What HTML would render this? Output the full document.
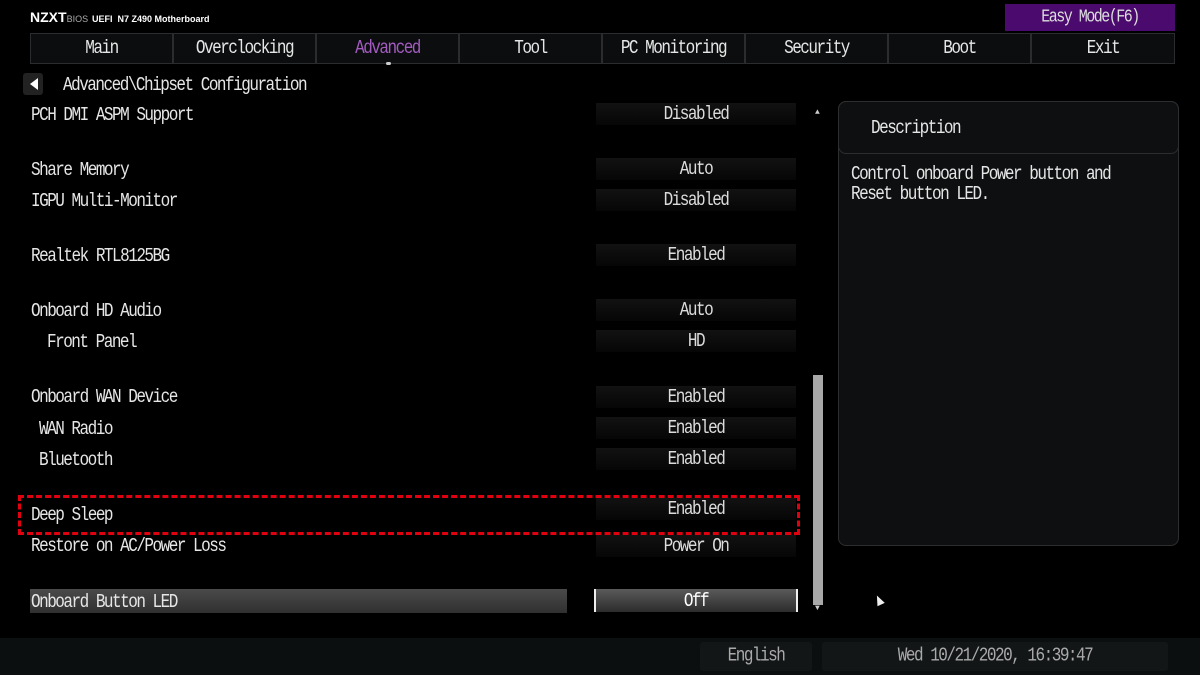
<!DOCTYPE html>
<html><head><meta charset="utf-8"><style>
*{margin:0;padding:0;box-sizing:border-box}
body{width:1200px;height:675px;background:#000;position:relative;overflow:hidden;font-family:"Liberation Mono",monospace;color:#e6e6e6}
.t{position:absolute;font-size:16px;letter-spacing:-1.5px;line-height:20px;white-space:nowrap;transform:scaleY(1.2);transform-origin:0 50%}
.lbl{left:31px}
.s{display:inline-block;transform:scaleY(1.2)}
.val{position:absolute;left:596px;width:200px;height:22px;background:linear-gradient(#121212,#060606);text-align:center;font-size:16px;letter-spacing:-1.5px;line-height:22px;color:#dcdcdc}
.tab{position:absolute;top:33px;height:31px;width:143px;background:#0b0d0e;border:1px solid #2a2d2f;text-align:center;font-size:16px;letter-spacing:-1.5px;line-height:28px;color:#e6e6e6}
</style></head><body>
<div style="position:absolute;left:30px;top:9px;font-family:'Liberation Sans',sans-serif;font-weight:bold;font-size:14px;color:#fff;letter-spacing:0">NZXT<span style="font-weight:normal;font-size:9px;color:#aaa">BIOS</span> <span style="font-size:9px">UEFI &nbsp;N7 Z490 Motherboard</span></div>
<div style="position:absolute;left:1005px;top:4px;width:170px;height:27px;background:#4a0a6e;text-align:center;font-size:15px;letter-spacing:-1.5px;line-height:27px;color:#ddd"><span class="s">Easy Mode(F6)</span></div>
<div class="tab" style="left:30px"><span class="s">Main</span></div>
<div class="tab" style="left:173px"><span class="s">Overclocking</span></div>
<div class="tab" style="left:316px;color:#a35bc0"><span class="s">Advanced</span></div>
<div class="tab" style="left:459px"><span class="s">Tool</span></div>
<div class="tab" style="left:602px"><span class="s">PC Monitoring</span></div>
<div class="tab" style="left:745px"><span class="s">Security</span></div>
<div class="tab" style="left:888px"><span class="s">Boot</span></div>
<div class="tab" style="left:1031px;width:144px"><span class="s">Exit</span></div>
<div style="position:absolute;left:386px;top:62px;width:5px;height:3px;background:#ccc;border-radius:2px"></div>
<div style="position:absolute;left:23px;top:73px;width:20px;height:22px;background:#222;border-radius:3px"></div>
<div style="position:absolute;left:30px;top:78px;width:0;height:0;border-top:6px solid transparent;border-bottom:6px solid transparent;border-right:8px solid #fff"></div>
<div class="t" style="left:63px;top:75px">Advanced\Chipset Configuration</div>

<div class="t lbl" style="top:105px">PCH DMI ASPM Support</div><div class="val" style="top:103px"><span class="s">Disabled</span></div>
<div class="t lbl" style="top:160px">Share Memory</div><div class="val" style="top:158px"><span class="s">Auto</span></div>
<div class="t lbl" style="top:191px">IGPU Multi-Monitor</div><div class="val" style="top:189px"><span class="s">Disabled</span></div>
<div class="t lbl" style="top:246px">Realtek RTL8125BG</div><div class="val" style="top:244px"><span class="s">Enabled</span></div>
<div class="t lbl" style="top:301px">Onboard HD Audio</div><div class="val" style="top:299px"><span class="s">Auto</span></div>
<div class="t" style="left:47px;top:332px">Front Panel</div><div class="val" style="top:330px"><span class="s">HD</span></div>
<div class="t lbl" style="top:387px">Onboard WAN Device</div><div class="val" style="top:386px"><span class="s">Enabled</span></div>
<div class="t" style="left:39px;top:419px">WAN Radio</div><div class="val" style="top:417px"><span class="s">Enabled</span></div>
<div class="t" style="left:39px;top:450px">Bluetooth</div><div class="val" style="top:448px"><span class="s">Enabled</span></div>
<div class="t lbl" style="top:505px">Deep Sleep</div><div class="val" style="top:498px"><span class="s">Enabled</span></div>
<div class="t lbl" style="top:536px">Restore on AC/Power Loss</div><div class="val" style="top:535px"><span class="s">Power On</span></div>
<div style="position:absolute;left:18px;top:495px;width:782px;height:40px;border:3px dashed #e00010"></div>
<div style="position:absolute;left:30px;top:589px;width:537px;height:24px;background:linear-gradient(#4a4a4a,#303030)"></div>
<div class="t lbl" style="top:592px">Onboard Button LED</div>
<div class="val" style="top:589px;left:594px;width:204px;height:23px;background:linear-gradient(#5a5a5a,#2c2c2c);border-left:2px solid #eee;border-right:2px solid #eee;color:#fff;line-height:24px"><span class="s">Off</span></div>

<div style="position:absolute;left:815px;top:108px;font-size:8px;color:#ccc">▲</div>
<div style="position:absolute;left:813px;top:375px;width:10px;height:230px;background:#a8a8a8"></div>
<div style="position:absolute;left:815px;top:604px;font-size:8px;color:#ccc">▼</div>

<div style="position:absolute;left:838px;top:101px;width:341px;height:445px;background:#0d0f10;border:1px solid #2c2e30;border-radius:8px"></div>
<div style="position:absolute;left:838px;top:101px;width:341px;height:53px;border:1px solid #2c2e30;border-radius:8px"></div>
<div class="t" style="left:871px;top:118px">Description</div>
<div class="t" style="left:851px;top:164px">Control onboard Power button and</div>
<div class="t" style="left:851px;top:184px">Reset button LED.</div>
<div style="position:absolute;left:875px;top:595px;width:0;height:0;border-left:4px solid transparent;border-right:4px solid transparent;border-bottom:10px solid #eee;transform:rotate(-25deg)"></div>

<div style="position:absolute;left:0;top:638px;width:1200px;height:37px;background:#0c0f10"></div>
<div style="position:absolute;left:700px;top:642px;width:112px;height:29px;background:#121617;border-radius:3px;text-align:center;font-size:16px;letter-spacing:-1.5px;line-height:29px;color:#aaa"><span class="s">English</span></div>
<div style="position:absolute;left:822px;top:642px;width:346px;height:29px;background:#121617;border-radius:3px;text-align:center;font-size:16px;letter-spacing:-1.5px;line-height:29px;color:#aaa"><span class="s">Wed 10/21/2020, 16:39:47</span></div>
</body></html>
